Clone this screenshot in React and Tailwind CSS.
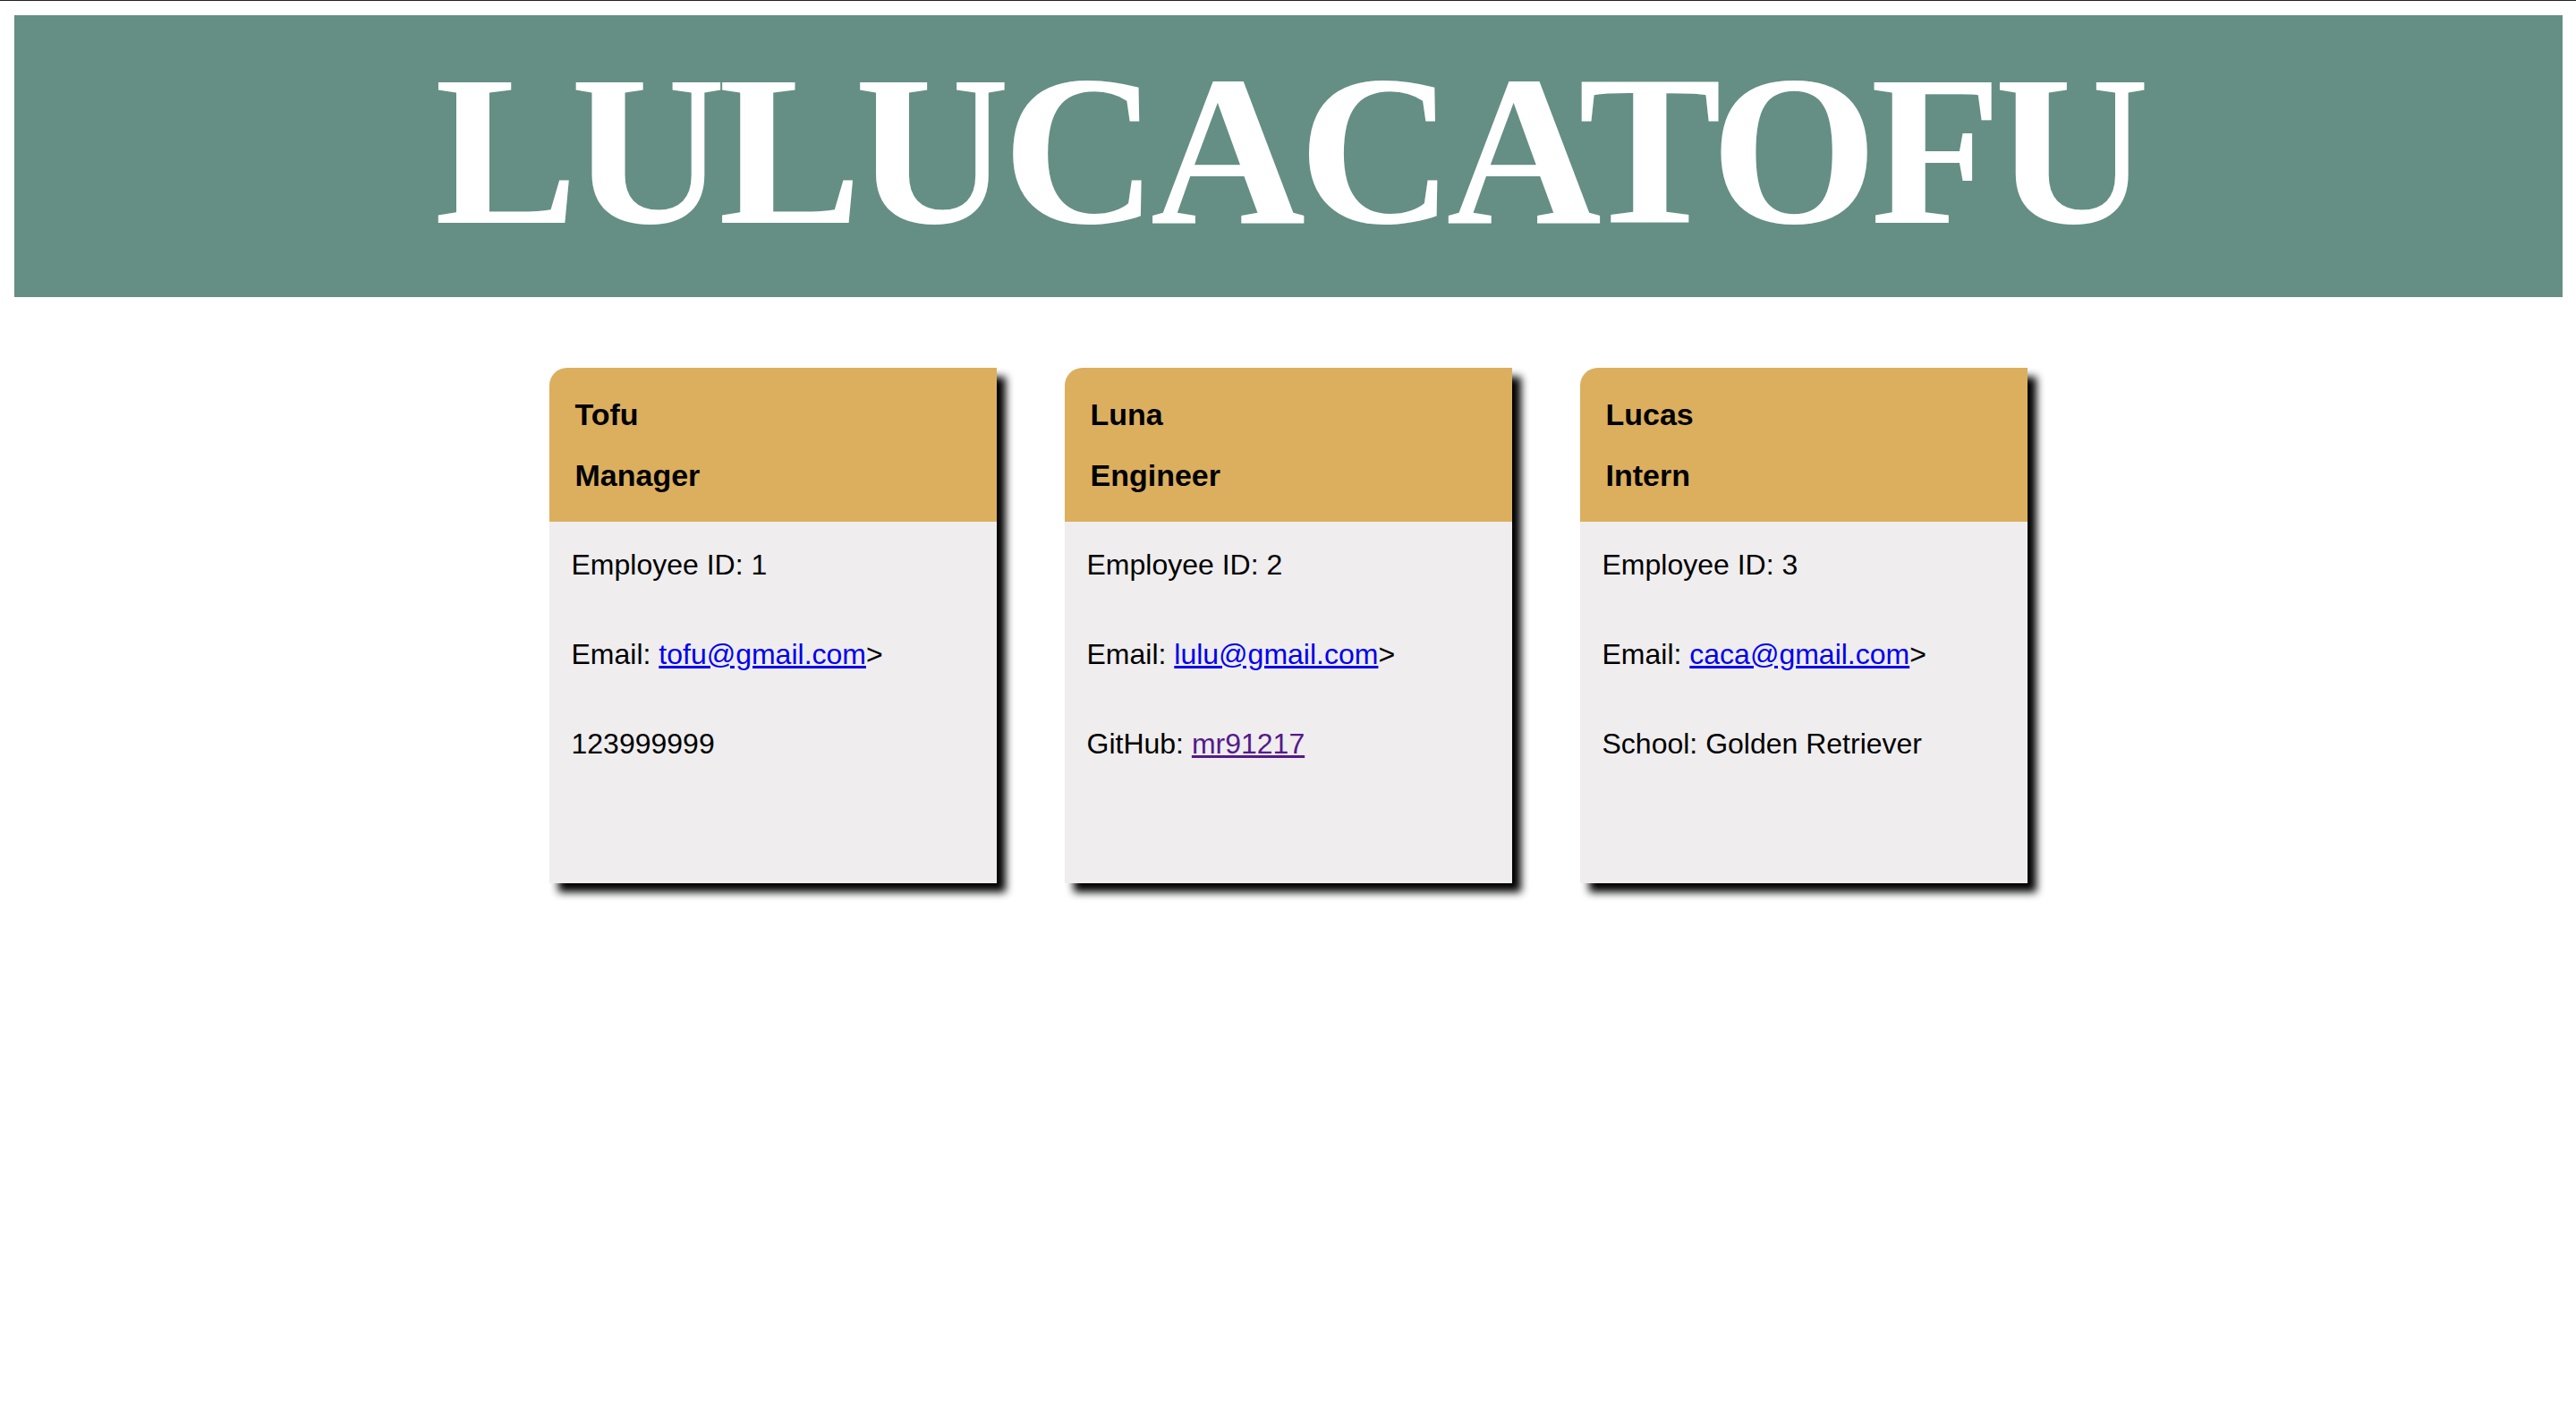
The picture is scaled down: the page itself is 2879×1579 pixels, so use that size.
import React from "react";

const team = [
  {
    name: "Tofu",
    role: "Manager",
    id: 1,
    email: "tofu@gmail.com",
    extra: <p>123999999</p>,
  },
  {
    name: "Luna",
    role: "Engineer",
    id: 2,
    email: "lulu@gmail.com",
    extra: (
      <p>
        GitHub:{" "}
        <a href="#" className="text-[#551a8b] underline">
          mr91217
        </a>
      </p>
    ),
  },
  {
    name: "Lucas",
    role: "Intern",
    id: 3,
    email: "caca@gmail.com",
    extra: <p>School: Golden Retriever</p>,
  },
];

function EmployeeCard({ member }) {
  return (
    <div className="w-[500px] h-[576px] flex flex-col rounded-tl-[20px] bg-[#efedee] shadow-[10px_10px_10px_#000]">
      <div className="h-[172px] shrink-0 rounded-tl-[20px] bg-[#dcaf5e] pl-[29px] pt-[18px] text-[34px] font-bold leading-[68px] text-black">
        <div>{member.name}</div>
        <div>{member.role}</div>
      </div>
      <div className="flex flex-col gap-[63px] px-[25px] pt-[30px] text-[32px] leading-[37px] text-black">
        <p>Employee ID: {member.id}</p>
        <p>
          Email:{" "}
          <a href="#" className="text-[#0000ee] underline">
            {member.email}
          </a>
          &gt;
        </p>
        {member.extra}
      </div>
    </div>
  );
}

export default function App() {
  return (
    <div className="min-h-screen bg-white border-t border-[#222] font-['Liberation_Sans',Arial,sans-serif]">
      <header className="mt-[16px] ml-[16px] mr-[15px] h-[315px] bg-[#658f84] pt-[31px] text-center">
        <h1 className="font-['Liberation_Serif','Times_New_Roman',serif] text-[240px] font-bold leading-[240px] tracking-[-8px] text-white">
          LULUCACATOFU
        </h1>
      </header>

      <main className="mt-[79px] flex justify-center gap-[76px]">
        {team.map((member) => (
          <EmployeeCard key={member.id} member={member} />
        ))}
      </main>
    </div>
  );
}
